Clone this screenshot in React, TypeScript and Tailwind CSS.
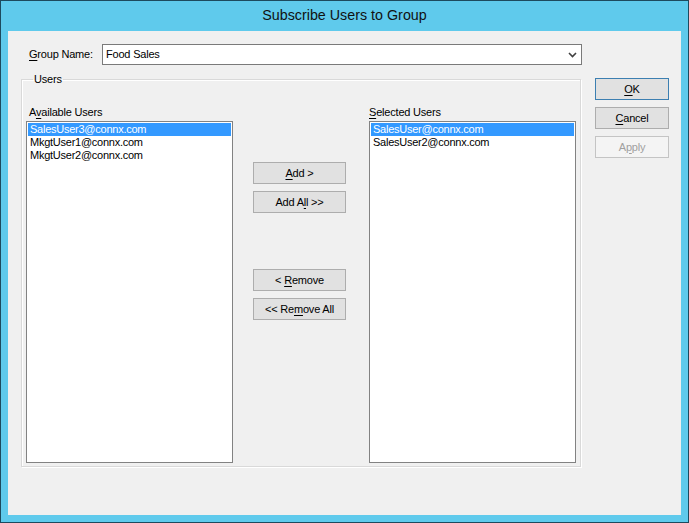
import { ReactNode } from 'react'

const font = { fontFamily: '"Liberation Sans", Arial, sans-serif' }

function Mn({ children }: { children: ReactNode }) {
  return <span className="underline underline-offset-[2px] decoration-[1px]">{children}</span>
}

function Btn({ children, w = 'w-[93px]', kind = 'normal' }: { children: ReactNode; w?: string; kind?: 'normal' | 'default' | 'disabled' }) {
  const cls =
    kind === 'default'
      ? 'border-[#3c7fb1] bg-[#e1e1e1] text-black'
      : kind === 'disabled'
        ? 'border-[#c4c4c4] bg-[#f4f4f4] text-[#a0a0a0]'
        : 'border-[#adadad] bg-[#e1e1e1] text-black'
  return (
    <div className={`${w} h-[22px] border flex items-center justify-center text-[11px] leading-[13px] tracking-[-0.2px] ${cls}`}>
      <span>{children}</span>
    </div>
  )
}

function ListBox({ items, selected }: { items: string[]; selected: number }) {
  return (
    <div className="w-[207px] h-[342px] border border-[#828282] bg-white p-[1px]">
      {items.map((it, i) => (
        <div
          key={it}
          className={`h-[13px] pl-[2px] text-[11px] leading-[13px] tracking-[-0.25px] whitespace-nowrap ${i === selected ? 'bg-[#3399ff] text-white' : 'text-black'}`}
        >
          {it}
        </div>
      ))}
    </div>
  )
}

export default function App() {
  return (
    <div style={font} className="w-[689px] h-[523px] border border-[#1d4a5e] bg-[#5fcaec] flex flex-col select-none">
      {/* title bar */}
      <div className="h-[30px] flex items-center justify-center pb-[1px]">
        <span className="text-[14.3px] text-[#111] leading-none">Subscribe Users to Group</span>
      </div>

      {/* client area */}
      <div className="flex-1 mx-[7px] mb-[7px] bg-[#f0f0f0] pl-[13px] pt-[13px] text-black">
        <div className="w-[561px] h-[21px] flex items-center">
          <div className="ml-[8px] w-[73px] text-[11px] leading-[13px] tracking-[-0.2px]">
            <Mn>G</Mn>roup Name:
          </div>
          <div className="flex-1 h-[21px] border border-[#7a7a7a] bg-white flex items-center pl-[3px] pr-[4px]">
            <span className="flex-1 text-[11px] leading-[13px] tracking-[-0.2px]">Food Sales</span>
            <svg width="9" height="6" viewBox="0 0 9 6" className="mt-[1px]">
              <polyline points="1,1 4.5,4.5 8,1" fill="none" stroke="#404040" strokeWidth="1.6" />
            </svg>
          </div>
        </div>

        <div className="mt-[8px] flex items-start">
          <fieldset className="w-[560px] border border-[#d9d9d9] shadow-[inset_1px_1px_0_#ffffff,1px_1px_0_#ffffff] pl-[4px] pr-[4px] pt-[20px] pb-[3px]">
            <legend className="ml-[7px] px-[1px] text-[11px] leading-[13px] tracking-[-0.2px]">Users</legend>
            <div className="flex items-start">
              <div className="flex flex-col">
                <div className="pl-[3px] h-[13px] mb-[2px] text-[11px] leading-[13px] tracking-[-0.2px]">
                  A<Mn>v</Mn>ailable Users
                </div>
                <ListBox items={['SalesUser3@connx.com', 'MkgtUser1@connx.com', 'MkgtUser2@connx.com']} selected={0} />
              </div>

              <div className="ml-[20px] pt-[56px] flex flex-col">
                <Btn>
                  <Mn>A</Mn>dd &gt;
                </Btn>
                <div className="mt-[7px]">
                  <Btn>
                    Add A<Mn>l</Mn>l &gt;&gt;
                  </Btn>
                </div>
                <div className="mt-[56px]">
                  <Btn>
                    &lt; <Mn>R</Mn>emove
                  </Btn>
                </div>
                <div className="mt-[7px]">
                  <Btn>
                    &lt;&lt; Re<Mn>m</Mn>ove All
                  </Btn>
                </div>
              </div>

              <div className="ml-[23px] flex flex-col">
                <div className="h-[13px] mb-[2px] text-[11px] leading-[13px] tracking-[-0.2px]">
                  <Mn>S</Mn>elected Users
                </div>
                <ListBox items={['SalesUser@connx.com', 'SalesUser2@connx.com']} selected={0} />
              </div>
            </div>
          </fieldset>

          <div className="ml-[14px] mt-[5px] flex flex-col gap-[7px]">
            <Btn w="w-[74px]" kind="default">
              <Mn>O</Mn>K
            </Btn>
            <Btn w="w-[74px]">
              <Mn>C</Mn>ancel
            </Btn>
            <Btn w="w-[74px]" kind="disabled">
              A<Mn>p</Mn>ply
            </Btn>
          </div>
        </div>
      </div>
    </div>
  )
}
